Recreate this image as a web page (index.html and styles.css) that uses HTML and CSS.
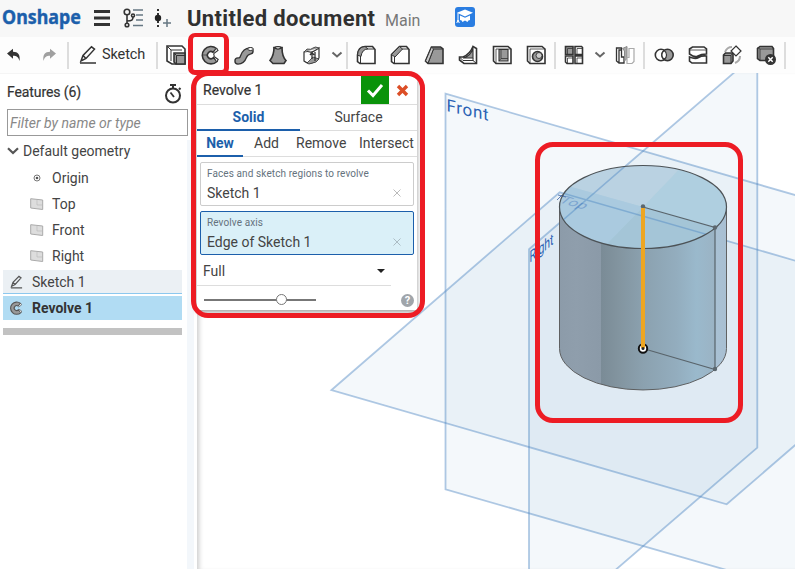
FILE: index.html
```html
<!DOCTYPE html>
<html lang="en">
<head>
<meta charset="utf-8">
<title>Untitled document</title>
<link rel="stylesheet" href="styles.css">
</head>
<body>
<div class="app">
  <header class="topbar">
    <svg class="logo" width="82" height="36" viewBox="0 0 82 36"><text x="2" y="23" textLength="79" lengthAdjust="spacingAndGlyphs">Onshape</text></svg>
    <svg class="ic menu" width="20" height="20" viewBox="0 0 20 20"><path d="M2 3.5h16M2 10h16M2 16.500h16" stroke="#333" stroke-width="3"/></svg>
    <svg class="ic tree" width="22" height="20" viewBox="0 0 22 20" fill="none" stroke="#333" stroke-width="1.6"><circle cx="5" cy="4" r="2.800"/><path d="M5 7v9M5 13c5 0 6-1 6-4"/><circle cx="11" cy="7.500" r="1.500"/><circle cx="5" cy="17" r="1.800"/><path d="M11 2h10M14 7h7M14 12h7M11 17.500h10" stroke="#667783"/></svg>
    <svg class="ic ver" width="18" height="20" viewBox="0 0 18 20"><path d="M5 0v19" stroke="#333" stroke-width="2" stroke-dasharray="2 2"/><circle cx="5" cy="9" r="3.200" fill="#222"/><path d="M10 14h8M14 10v8" stroke="#667783" stroke-width="1.500"/></svg>
    <h1 class="doc">Untitled document</h1>
    <span class="branch">Main</span>
    <svg class="edu" width="20" height="20" viewBox="0 0 20 20"><rect width="20" height="20" rx="3" fill="#2a7de1"/><path d="M10 2.500l8 3.200-8 3.800-8-3.800z" fill="#fff"/><path d="M5 8.500l5 2.200 5-2.200v4.500q-2 0-2.500 2L10 13.500 7.500 15Q7 13 5 13z" fill="#fff"/><path d="M3 6v9M1.800 16l1.200-3 1.300 3" stroke="#fff" fill="none"/></svg>
  </header>

  <nav class="toolbar">
    <span class="cell undo"><svg width="16" height="16" viewBox="0 0 16 16"><path d="M1 6.500L7 1.800v3c5 0 7.500 3 6.500 9.200C12.500 10 10.500 8.700 7 8.700v3z" fill="#333"/></svg></span>
    <span class="cell redo"><svg width="16" height="16" viewBox="0 0 16 16"><path d="M15 6.500L9 1.800v3c-5 0-7.500 3-6.500 9.200C3.500 10 5.500 8.700 9 8.700v3z" fill="#a0a0a0"/></svg></span>
    <i class="sep"></i>
    <span class="cell sketch"><svg width="20" height="20" viewBox="0 0 20 20" fill="none" stroke="#333" stroke-width="1.500"><path d="M3 16l2-5.500L13.500 1.800l3 2.400L8 13.500zM5 10.500l3 3M2 18h16"/></svg><b class="lbl">Sketch</b></span>
    <i class="sep"></i>
    <span class="cell"><svg class="t" viewBox="0 0 20 20"><path d="M1 1h15l3 3v15H6L1 16z" fill="#fff"/><path d="M5 16V5h11M1.500 1.500L5 5" stroke-width="1"/><path d="M8 8h11v11H10l-2-2z" class="g"/><path d="M8 8l2.500 2.500H19M10.500 10.500V19" stroke-width="1"/></svg></span>
    <span class="cell"><svg class="t" viewBox="0 0 20 20"><path d="M16.500 3.500A8.700 8.700 0 1 0 17 16.500L13.500 12.500A3.500 3.500 0 1 1 13 7.300z" class="g"/><path d="M16.500 3.500l1.500 2-4.500 3.300M17 16.500l1.200-2-4.200-3M13.500 8.800q1 1.200.5 2.700" fill="#fff" stroke-width="1.100"/><path d="M2 10h5" stroke-width=".7"/></svg></span>
    <span class="cell"><svg class="t" viewBox="0 0 20 20"><path d="M4 16c8 0 3-9 12-10" stroke="#333" stroke-width="7.500" stroke-linecap="round"/><path d="M4 16c8 0 3-9 12-10" stroke="#999" stroke-width="4.800" stroke-linecap="round"/><ellipse cx="16.500" cy="4" rx="2.800" ry="1.500" fill="#fff" stroke-width="1"/></svg></span>
    <span class="cell"><svg class="t" viewBox="0 0 20 20"><path d="M6 2.500C6 8 4 13 2 15.500l3 3h11l2-3C15.500 13 14 8 14 2.500z" class="g"/><path d="M6 2.800q4 2.500 8 0-4-2.200-8 0z" fill="#fff" stroke-width="1.200"/></svg></span>
    <span class="cell"><svg class="t" viewBox="0 0 20 20" stroke-width="1"><path d="M2 7q4-1 6 0t9-4v10q-3 4-7 5-5 1-8-2z" fill="#fff" stroke-width="1.200"/><path d="M2 7L5 4q4 1 6-1t6 0M5 18l6-6 6 2-3 3-7 2z" class="g" stroke-width=".8"/><path d="M10 14V8M8 10l2-2.500 2 2.500M13 7v9" stroke-width="1.300"/></svg></span>
    <span class="cell chev a"><svg width="12" height="8" viewBox="0 0 12 8"><path d="M1.500 1.500L6 5.500l4.500-4" fill="none" stroke="#666" stroke-width="2"/></svg></span>
    <i class="sep"></i>
    <span class="cell"><svg class="t" viewBox="0 0 20 20"><path d="M1.500 10Q2 2 9 1.500h7.500l2.500 3V18.500H4l-2.500-2z" fill="#fff"/><path d="M1.500 10Q2 2 9 1.500l3 2.500q-6 0-7 7.500z" class="g" stroke-width="1"/><path d="M4.500 11v7.500M12 4h6" stroke-width="1"/></svg></span>
    <span class="cell"><svg class="t" viewBox="0 0 20 20"><path d="M1.500 9.500l8-8h7l2.500 3V18.500H4l-2.500-2z" fill="#fff"/><path d="M1.500 9.500l8-8 3 2.500-7.500 8z" class="g" stroke-width="1"/><path d="M4.500 12v6.500M12 4h6" stroke-width="1"/></svg></span>
    <span class="cell"><svg class="t" viewBox="0 0 20 20"><path d="M1.500 16l6-14h9l2.500 2v14.500H4z" class="g"/><path d="M4 18.500L9.500 4H19" stroke-width="1"/><path d="M1.500 16l6-14 2 2L4 18z" fill="#c8c8c8" stroke-width="1"/></svg></span>
    <span class="cell"><svg class="t" viewBox="0 0 20 20"><path d="M15 1.500l3.500 2v15H6l-4.500-3.500V12H5Q12 9 15 1.500z" fill="#fff"/><path d="M15 3v10H5q8-2 10-10z" class="g" stroke-width="1.100"/><path d="M1.500 12L5 15.500h10l3.500 3M15 13v3" stroke-width="1"/></svg></span>
    <span class="cell"><svg class="t" viewBox="0 0 20 20"><path d="M1.500 1.500H16l3 2.500v14.500H4l-2.500-2.500z" fill="#fff"/><path d="M7 4.500h9v11.500H7z" class="g" stroke-width="1.100"/><path d="M4 18.500V4h15M9 4.500v9l-2 2.500M9 13.500h7" stroke-width=".8"/></svg></span>
    <span class="cell"><svg class="t" viewBox="0 0 20 20"><path d="M1.500 1.500H16l3 2.500v14.500H4l-2.500-2.500z" fill="#fff"/><path d="M4 18.500V4h15" stroke-width=".8"/><circle cx="11.500" cy="11.500" r="5" class="g"/><circle cx="13" cy="10.500" r="3" fill="#ccc" stroke-width=".9"/></svg></span>
    <i class="sep n"></i>
    <span class="cell"><svg class="t" viewBox="0 0 20 20"><path d="M1.500 1.500h7.500v8H1.500z" class="g"/><path d="M11 1.500h6.500l1 1v7H11zM1.500 11H9v7.500H3l-1.500-1.500zM11 11h7.500v7.500H11z" fill="#fff"/><path d="M3.500 9V3.500H9M13 9V3.500h5M3.500 18v-5H9M13 18v-5h5" stroke-width=".8"/></svg></span>
    <span class="cell chev b"><svg width="12" height="8" viewBox="0 0 12 8"><path d="M1.500 1.500L6 5.500l4.500-4" fill="none" stroke="#666" stroke-width="2"/></svg></span>
    <span class="cell"><svg class="t" viewBox="0 0 20 20"><path d="M1.500 3l5 0v9H9v6H4l-2.500-2zM4 18V5h2.500" fill="#fff" stroke-width="1.300"/><path d="M7.500 3.500l4.500-2v12L9.500 16V6z" fill="#aaa" stroke="#888" stroke-width="1"/><path d="M19 3.500h-5v9h-2v6h5l2-2z" fill="#fff" stroke="#aaa" stroke-width="1.200"/></svg></span>
    <i class="sep w"></i>
    <span class="cell"><svg class="t" viewBox="0 0 20 20"><circle cx="7" cy="10" r="5.700" fill="#fff"/><circle cx="13.500" cy="10" r="5.700" class="g"/><path d="M10.200 5.400a5.700 5.700 0 0 0 0 9.200 5.700 5.700 0 0 0 0-9.200z" fill="#fff" stroke-width="1.200"/></svg></span>
    <span class="cell"><svg class="t" viewBox="0 0 20 20"><path d="M1.500 7V4l3-2H16l2.500 2v5Q13 9 10 11T1.500 9zM1.500 12q6 2.500 9 .5T18.500 11v7H4l-2.500-2z" fill="#fff"/><path d="M1.500 5H18" stroke-width=".8"/></svg></span>
    <span class="cell"><svg class="t" viewBox="0 0 20 20"><path d="M3 7q2-5 7-5M13 18q5-2 5-7" stroke="#aaa" stroke-width="2"/><path d="M1.500 10l2-2H11v8l-2 2.500H1.500z" class="g"/><path d="M1.500 10.500H9v8M9 10.500L11 8" stroke-width="1"/><path d="M14 1l5 5-5 5-5-5z" fill="#fff" stroke-width="1.200"/></svg></span>
    <span class="cell"><svg class="t" viewBox="0 0 20 20"><path d="M1.500 3.500L4 1.500h12l1.500 2v12H4l-2.500-2z" class="g"/><path d="M4 15.500V4h13M4 4L1.500 2.500" stroke-width=".8"/><circle cx="14.500" cy="14.500" r="4.700" fill="#333" stroke="#333"/><path d="M12.300 12.300l4.400 4.400M16.700 12.300l-4.400 4.400" stroke="#fff" stroke-width="1.500"/></svg></span>
    <i class="sep"></i>
  </nav>

  <main class="work">
    <aside class="side">
      <div class="head"><span>Features (6)</span>
        <svg width="20" height="22" viewBox="0 0 20 22" fill="none" stroke="#333" stroke-width="2"><circle cx="10" cy="12.500" r="7"/><path d="M7 2h6M10 2v3M16 5l1.500 1.500" /><path d="M7.500 9.500L11 14" stroke-width="1.800"/></svg></div>
      <div class="filter">Filter by name or type</div>
      <div class="row group"><svg width="12" height="8" viewBox="0 0 12 8"><path d="M1 1.200L6 6l5-4.800" fill="none" stroke="#555" stroke-width="2.200"/></svg><span class="s-def">Default geometry</span></div>
      <div class="row child"><svg width="14" height="12" viewBox="0 0 14 12"><circle cx="7" cy="6" r="3" fill="none" stroke="#777"/><circle cx="7" cy="6" r="1.300" fill="#555"/></svg><span>Origin</span></div>
      <div class="row child"><svg width="14" height="12" viewBox="0 0 14 12"><path d="M.7.700l12 1.300v9.500L.7 10z" fill="#ddd" stroke="#aaa"/><path d="M7 2v5h5" fill="none" stroke="#bbb" stroke-width=".7"/></svg><span>Top</span></div>
      <div class="row child"><svg width="14" height="12" viewBox="0 0 14 12"><path d="M.7.700l12 1.300v9.500L.7 10z" fill="#ddd" stroke="#aaa"/><path d="M7 2v5h5" fill="none" stroke="#bbb" stroke-width=".7"/></svg><span>Front</span></div>
      <div class="row child"><svg width="14" height="12" viewBox="0 0 14 12"><path d="M.7.700l12 1.300v9.500L.7 10z" fill="#ddd" stroke="#aaa"/><path d="M7 2v5h5" fill="none" stroke="#bbb" stroke-width=".7"/></svg><span>Right</span></div>
      <div class="row feat sk"><svg width="15" height="14" viewBox="0 0 20 20" fill="none" stroke="#555" stroke-width="1.700"><path d="M3 16l2-5.500L13.500 1.800l3 2.400L8 13.500zM5 10.500l3 3M2 18.500h16"/></svg><span>Sketch 1</span></div>
      <div class="row feat rv"><svg class="t" viewBox="0 0 20 20"><path d="M16.500 3.500A8.700 8.700 0 1 0 17 16.500L13.500 12.500A3.500 3.500 0 1 1 13 7.300z" class="g"/><path d="M16.500 3.500l1.500 2-4.500 3.300M17 16.500l1.200-2-4.200-3" fill="#fff" stroke-width="1"/></svg><span>Revolve 1</span></div>
      <div class="bar"></div>
    </aside>
    <div class="split"></div>
    <section class="view">
      <svg class="scene" width="598" height="496" viewBox="197 73 598 496">
        <defs>
          <linearGradient id="wall" gradientUnits="userSpaceOnUse" x1="559" y1="0" x2="727" y2="0">
            <stop offset="0" stop-color="#8c9ba9"/><stop offset=".1" stop-color="#8f9eac"/><stop offset=".25" stop-color="#8b9aa8"/><stop offset=".25" stop-color="#7a8b96"/><stop offset=".35" stop-color="#82949f"/><stop offset=".5" stop-color="#8ba1af"/><stop offset=".7" stop-color="#93adbe"/><stop offset=".82" stop-color="#9ab9cc"/><stop offset=".93" stop-color="#9bb3c4"/><stop offset=".93" stop-color="#a9c1d4"/><stop offset="1" stop-color="#a8bfd2"/>
          </linearGradient>
          <clipPath id="cap"><ellipse cx="643" cy="207" rx="83.500" ry="41.500"/></clipPath>
        </defs>
        <g class="plane">
          <path d="M445.500 93.700L845 209.500V604L445.500 489.300z"/>
          <path d="M529 249.300L757.300 52.600V447.700L529 644.500z"/>
          <path d="M331.500 390L559.700 192.300 955 307 726.700 504.300z"/>
        </g>
        <g class="ptext">
          <text transform="matrix(1 .23 0 1 446.500 111)" font-size="17" textLength="42">Front</text>
          <text transform="matrix(1 -.8 0 1 529.500 263)" font-size="16" textLength="24" lengthAdjust="spacingAndGlyphs">Right</text>
        </g>
        <path d="M559.500 207V348.500A83.500 41.500 0 0 0 726.500 348.500V207z" fill="url(#wall)" stroke="#555" stroke-width=".9"/>
        <g clip-path="url(#cap)">
          <path d="M550 160h190v95H550z" fill="#b0cfe0"/>
          <path d="M643 207L550 181V160H688z" fill="#bbd2e2"/>
          <path d="M643 207L550 181v75h45z" fill="#aacbdf"/>
          <path d="M643 207L596 255h150v-18z" fill="#a4c5d8"/>
          <path d="M559.700 192.300L740 244M540 240L645 149" stroke="#4f88c4" stroke-width="1.600" opacity=".45"/>
        </g>
        <g class="ptext"><text transform="matrix(.95 .28 -.65 .55 558 202)" font-size="16" opacity=".35">Top</text><path d="M557 200l5-5 2 .5M558 195l8 2" stroke="#365fa5" fill="none" opacity=".8"/></g>
        <ellipse cx="643" cy="207" rx="83.500" ry="41.500" fill="none" stroke="#4c5256" stroke-width="1.200"/>
        <path d="M643 207l72 20.500v142L643 348.500" fill="none" stroke="#59646b" stroke-width="1.200"/>
        <circle cx="715" cy="227.500" r="2.200" fill="#5c676e"/><circle cx="715" cy="369" r="2.200" fill="#5c676e"/><circle cx="643" cy="206.500" r="2.200" fill="#5c676e"/>
        <circle cx="643" cy="348.500" r="4.200" fill="#fff" stroke="#111" stroke-width="2"/>
        <path d="M643 208v140" stroke="#eea622" stroke-width="4"/>
        <circle cx="643" cy="348.500" r="1.500" fill="#222"/>
      </svg>

      <div class="dialog">
        <div class="title"><span class="s-title">Revolve 1</span>
          <span class="ok"><svg width="18" height="15" viewBox="0 0 18 15"><path d="M2 7.500l5 5 9-10.500" fill="none" stroke="#fff" stroke-width="3"/></svg></span>
          <svg class="no" width="13" height="13" viewBox="0 0 13 13"><path d="M2 2l9 9M11 2l-9 9" stroke="#dc4e27" stroke-width="3.400"/></svg></div>
        <div class="tabs"><span class="on">Solid</span><span>Surface</span></div>
        <div class="subtabs"><span class="on">New</span><span>Add</span><span>Remove</span><span>Intersect</span></div>
        <div class="field"><small>Faces and sketch regions to revolve</small><div><span>Sketch 1</span><svg width="8" height="8" viewBox="0 0 8 8"><path d="M.5.500l7 7M7.500.500l-7 7" stroke="#bbb"/></svg></div></div>
        <div class="field active"><small class="s-ax">Revolve axis</small><div><span>Edge of Sketch 1</span><svg width="8" height="8" viewBox="0 0 8 8"><path d="M.5.500l7 7M7.500.500l-7 7" stroke="#abbcc4"/></svg></div></div>
        <div class="select"><span>Full</span><i class="caret"></i></div>
        <div class="foot"><div class="track"><i class="knob"></i></div><span class="help">?</span></div>
      </div>
    </section>
  </main>
  <div class="mark m1"></div>
  <div class="mark m2"></div>
  <div class="mark m3"></div>
</div>
</body>
</html>
```

FILE: styles.css
```css
* { box-sizing: border-box; }
body { margin: 0; font: 14px/20px Roboto, "Liberation Sans", sans-serif; color: #333; background: #fff; }
.app { position: relative; width: 795px; height: 569px; overflow: hidden; display: flex; flex-direction: column; }
svg { display: block; flex: none; }

.topbar { height: 37px; background: #f7f7f7; display: flex; align-items: center; flex: none; }
.logo text { font: bold 20px "Noto Sans", sans-serif; fill: #1c5fab; stroke: #1c5fab; stroke-width: .4px; }
.menu { margin: -1px 0 0 10px; }
.tree { margin: -1px 0 0 10px; }
.ver { margin: 0 0 0 9px; }
.doc { margin: 0 0 0 16px; font-size: 22px; line-height: 36px; font-weight: 700; width: 198px; letter-spacing: .35px; white-space: nowrap; color: #303030; }
.branch { font-size: 16px; color: #777; width: 70px; padding-top: 4px; }
.edu { margin-top: -3px; }

.toolbar { height: 36px; display: flex; align-items: center; flex: none; background: #fdfdfd; }
.cell { width: 34px; display: flex; justify-content: center; align-items: center; flex: none; }
.undo { width: 28px; }
.redo { width: 38px; padding-left: 3px; }
.sketch { width: 85px; justify-content: flex-start; padding-left: 8px; gap: 4px; }
.lbl { font-weight: 400; letter-spacing: -.1px; }
.a { width: 16px; }
.b { width: 17px; }
.sep { width: 2px; height: 27px; margin: 0 1px; background: #ddd; flex: none; }
.sep.w { margin: 0 2px 0 1px; }
.lbl { font-size: 14.500px; }
.t { width: 20px; height: 20px; fill: none; stroke: #333; stroke-width: 1.600; }
.t .g { fill: #999; }

.work { display: flex; flex: 1; min-height: 0; }
.side { width: 187px; flex: none; border-top: 1px solid #f5f5f5; }
.head { height: 35px; padding: 0 4px 0 7px; display: flex; align-items: center; justify-content: space-between; letter-spacing: -.1px; }
.head svg { margin-top: 5px; }
.head span { -webkit-text-stroke: .2px #333; }
.filter { margin: 0 -1px 0 7px; height: 27px; border: 1px solid #999; padding: 0 2px; line-height: 26px; font-style: italic; color: #888; background: #fff; letter-spacing: .03px; }
.row { height: 26px; display: flex; align-items: center; color: #444; }
.group { height: 29px; padding-left: 7px; gap: 4px; }
.child { padding-left: 30px; gap: 8px; }
.feat { margin: 0 5px 2px 3px; height: 24px; background: #ebf0f4; }
.sk { margin-top: 1px; border-bottom: 1px solid #8cc8ee; padding-left: 6px; gap: 8px; }
.rv { background: #b1dcf3; padding-left: 6px; gap: 9px; font-weight: 700; color: #333; }
.rv .t { width: 14px; height: 14px; stroke: #555; }
.bar { margin: 8px 5px 0 3px; height: 7px; background: #c2c2c2; }
.split { width: 7px; margin: 67px 3px 0 0; background: #f3f7fb; flex: none; }

.view { position: relative; flex: 1; box-shadow: inset 5px 0 5px -3px #ccc; }
.scene { position: absolute; left: 0; top: 0; }
.plane path { fill: rgba(72,138,188,.06); stroke: rgba(79,136,196,.45); stroke-width: 1.800; }
.ptext text { font-family: Roboto, sans-serif; fill: #2b63b5; }

.dialog { position: absolute; left: 0; top: 3px; width: 220px; height: 234px; background: #fff; box-shadow: 0 2px 5px rgba(0,0,0,.4); color: #444; }
.title { height: 29px; border-bottom: 1px solid #ddd; display: flex; padding-left: 6px; color: #333; }
.title span:first-child { width: 158px; line-height: 29px; -webkit-text-stroke: .2px #333; }
.ok { width: 28px; height: 28px; background: #0a930a; display: flex; align-items: center; justify-content: center; }
.no { margin: 8px 0 0 7px; }
.tabs { display: flex; height: 26px; border-bottom: 1px solid #ddd; line-height: 25px; text-align: center; }
.tabs span { width: 117px; height: 26px; }
.tabs .on { width: 103px; }
.on { color: #1c5fab; font-weight: 700; border-bottom: 2px solid #1c5fab; }
.subtabs { display: flex; height: 26px; border-bottom: 1px solid #ddd; line-height: 25px; }
.subtabs .on { width: 46px; height: 26px; text-align: center; margin-right: 11px; }
.subtabs span:nth-child(2) { width: 42px; }
.subtabs span:nth-child(3) { width: 63px; }
.field { margin: 5px 3px 0; height: 44px; border: 1px solid #ccc; border-radius: 2px; padding: 3px 12px 0 6px; }
.field small { display: block; font-size: 10px; line-height: 16px; color: #65727d; letter-spacing: .1px; }
.field div { display: flex; justify-content: space-between; align-items: center; line-height: 22px; }
.active { background: #daf0f8; border-color: #1c5fab; }
.select { width: 194px; height: 31px; border-bottom: 1px solid #ddd; display: flex; align-items: center; justify-content: space-between; padding: 2px 6px 0; }
.caret { border: 4px solid transparent; border-top-color: #222; border-bottom: 0; }
.foot { display: flex; height: 27px; align-items: center; justify-content: space-between; padding: 1px 3px 0 7px; }
.track { width: 112px; height: 2px; background: #777; }
.knob { display: block; width: 11px; height: 11px; margin: -5px 0 0 72px; border: 1px solid #777; border-radius: 50%; background: #fff; }
.help { width: 13px; height: 13px; border-radius: 50%; background: #a0a5aa; color: #fff; font: bold 11px/13px Roboto, sans-serif; text-align: center; }

.mark { position: absolute; border: 5px solid #ed1c24; }
.m1 { left: 188px; top: 33px; width: 41px; height: 42px; border-width: 4px 5px 5px; border-radius: 7px; }
.m2 { left: 191px; top: 71px; width: 234px; height: 247px; border-radius: 17px; }
.m3 { left: 535px; top: 142px; width: 208px; height: 281px; border-radius: 18px; }
```
